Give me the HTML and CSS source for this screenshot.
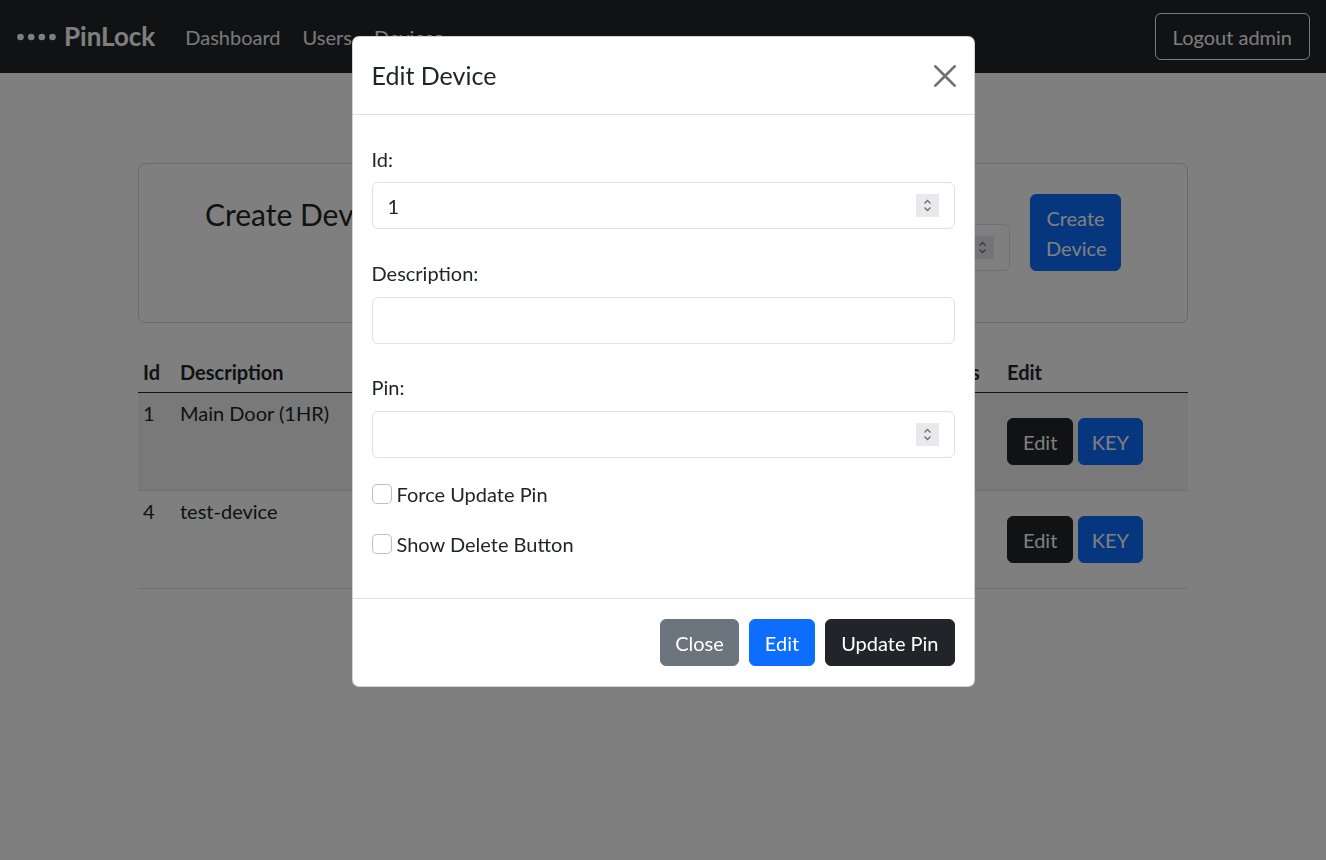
FILE: index.html
```html
<!DOCTYPE html>
<html lang="en">
<head>
<meta charset="utf-8">
<title>PinLock - Devices</title>
<link rel="stylesheet" href="styles.css">
</head>
<body>
<nav class="navbar">
  <a class="brand" href="#">
    <svg class="dots" width="40" height="8" viewBox="0 0 40 8"><circle cx="3.5" cy="4" r="3.3"/><circle cx="14.2" cy="4" r="3.3"/><circle cx="24.8" cy="4" r="3.3"/><circle cx="35.5" cy="4" r="3.3"/></svg>
    <span>PinLock</span>
  </a>
  <ul class="nav">
    <li><a href="#">Dashboard</a></li>
    <li><a href="#">Users</a></li>
    <li><a href="#" class="active">Devices</a></li>
  </ul>
  <button class="btn btn-outline-light logout">Logout admin</button>
</nav>

<main class="container">
  <div class="card">
    <div class="card-body">
      <h4 class="card-title">Create Device</h4>
      <form class="create-form">
        <input class="form-control desc-input" type="text">
        <div class="num pin-input">
          <input class="form-control" type="text">
          <span class="spin"><svg width="23" height="23" viewBox="0 0 23 23"><path d="M8.5 9.5 11.5 6.5 14.5 9.5M8.5 13.5 11.5 16.5 14.5 13.5"/></svg></span>
        </div>
        <button type="button" class="btn btn-primary create-btn">Create Device</button>
      </form>
    </div>
  </div>

  <table class="table">
    <colgroup>
      <col class="c-id"><col class="c-desc"><col class="c-pin"><col class="c-last"><col class="c-act"><col class="c-edit">
    </colgroup>
    <thead>
      <tr><th>Id</th><th>Description</th><th></th><th></th><th>Actions</th><th>Edit</th></tr>
    </thead>
    <tbody>
      <tr class="striped">
        <td>1</td><td>Main Door (1HR)</td><td></td><td></td><td></td>
        <td class="btn-cell"><div class="btn-row"><button class="btn btn-dark">Edit</button><button class="btn btn-primary key">KEY</button></div></td>
      </tr>
      <tr>
        <td>4</td><td>test-device</td><td></td><td></td><td></td>
        <td class="btn-cell"><div class="btn-row"><button class="btn btn-dark">Edit</button><button class="btn btn-primary key">KEY</button></div></td>
      </tr>
    </tbody>
  </table>
</main>

<div class="backdrop"></div>

<div class="modal">
  <div class="modal-dialog">
    <div class="modal-header">
      <h5 class="modal-title">Edit Device</h5>
      <button class="btn-close" type="button" aria-label="Close">
        <svg width="22" height="22" viewBox="0 0 16 16"><path d="M.293.293a1 1 0 0 1 1.414 0L8 6.586 14.293.293a1 1 0 1 1 1.414 1.414L9.414 8l6.293 6.293a1 1 0 0 1-1.414 1.414L8 9.414l-6.293 6.293a1 1 0 0 1-1.414-1.414L6.586 8 .293 1.707a1 1 0 0 1 0-1.414z"/></svg>
      </button>
    </div>
    <div class="modal-body">
      <div class="group first">
        <label class="form-label">Id:</label>
        <div class="num">
          <input class="form-control" type="text" value="1">
          <span class="spin"><svg width="23" height="23" viewBox="0 0 23 23"><path d="M8.5 9.5 11.5 6.5 14.5 9.5M8.5 13.5 11.5 16.5 14.5 13.5"/></svg></span>
        </div>
      </div>
      <div class="group desc-group">
        <label class="form-label">Description:</label>
        <input class="form-control" type="text">
      </div>
      <div class="group pin-group">
        <label class="form-label">Pin:</label>
        <div class="num">
          <input class="form-control" type="text">
          <span class="spin"><svg width="23" height="23" viewBox="0 0 23 23"><path d="M8.5 9.5 11.5 6.5 14.5 9.5M8.5 13.5 11.5 16.5 14.5 13.5"/></svg></span>
        </div>
      </div>
      <label class="form-check first-check"><input type="checkbox"><span>Force Update Pin</span></label>
      <label class="form-check last-check"><input type="checkbox"><span>Show Delete Button</span></label>
    </div>
    <div class="modal-footer">
      <button class="btn btn-secondary close-btn">Close</button>
      <button class="btn btn-primary">Edit</button>
      <button class="btn btn-dark">Update Pin</button>
    </div>
  </div>
</div>
</body>
</html>
```

FILE: styles.css
```css
* { box-sizing: border-box; }
html, body { margin: 0; padding: 0; }
body {
  font-family: Lato, "Liberation Sans", sans-serif;
  font-size: 20px;
  line-height: 1.5;
  color: #212529;
  background: #fff;
  min-height: 860px;
}

/* navbar */
.navbar {
  height: 73px;
  background: #212529;
  display: flex;
  align-items: center;
  padding: 0 16px;
}
.brand {
  display: flex;
  align-items: center;
  color: #fff;
  font-size: 26px;
  font-weight: 700;
  text-decoration: none;
  margin-right: 19px;
}
.dots { fill: #fff; margin-left: 1px; margin-right: 7px; }
.nav {
  display: flex;
  list-style: none;
  margin: 0;
  padding: 0;
  flex: 1;
}
.nav a {
  display: block;
  padding: 10px 11px;
  color: #f2f2f2;
  text-decoration: none;
}
.nav a.active { color: #fff; }

/* buttons */
.btn {
  font-family: inherit;
  font-size: 20px;
  line-height: 30px;
  padding: 7.5px 15px;
  border: 1px solid transparent;
  border-radius: 6px;
  cursor: pointer;
  color: #fff;
  background: transparent;
}
.btn-outline-light { color: #f8f9fa; border-color: #f8f9fa; }
.logout { padding-left: 17px; padding-right: 17px; }
.btn-primary { background: #0d6efd; border-color: #0d6efd; }
.btn-secondary { background: #6c757d; border-color: #6c757d; }
.btn-dark { background: #212529; border-color: #212529; }
.key { padding-left: 12.5px; padding-right: 12.5px; }
.close-btn { padding-left: 14px; padding-right: 14px; }

/* content */
.container {
  width: 1050px;
  margin: 90px auto 0;
}
.card {
  border: 1px solid rgba(0, 0, 0, .175);
  border-radius: 7px;
}
.card-body {
  padding: 30px 66px 51px;
  display: flex;
  justify-content: space-between;
  align-items: flex-start;
}
.card-title {
  margin: 2px 0 0;
  font-size: 30px;
  font-weight: 400;
  line-height: 1.2;
}
.create-form {
  display: flex;
  align-items: flex-end;
  gap: 20px;
}
.desc-input { width: 240px; }
.pin-input { width: 200px; }
.create-btn { width: 91px; }

.form-control {
  display: block;
  width: 100%;
  height: 47px;
  font-family: inherit;
  font-size: 20px;
  line-height: 30px;
  padding: 7.5px 15px;
  color: #212529;
  background: #fff;
  border: 1px solid #dee2e6;
  border-radius: 6px;
}
.num { position: relative; }
.spin {
  position: absolute;
  right: 16px;
  top: 50%;
  margin-top: -11.5px;
  width: 23px;
  height: 23px;
  background: #e9e9ed;
  display: block;
}
.spin svg { display: block; fill: none; stroke: #707070; stroke-width: 1.3; }

/* table */
.table {
  width: 100%;
  margin-top: 29px;
  border-collapse: collapse;
  table-layout: fixed;
}
.c-id { width: 37px; }
.c-desc { width: 300px; }
.c-pin { width: 200px; }
.c-last { width: 232px; }
.c-act { width: 95px; }
.c-edit { width: 186px; }
.table th, .table td {
  padding: 5px;
  text-align: left;
  vertical-align: top;
  border-bottom: 1px solid #dee2e6;
}
.table th { font-weight: 700; border-bottom: 1px solid #212529; }
.table tbody tr { height: 98px; }
.table tr.striped td { background: rgba(0, 0, 0, .05); }
.table td.btn-cell { vertical-align: middle; }
.btn-row { display: flex; gap: 5px; }

/* backdrop + modal */
.backdrop {
  position: fixed;
  inset: 0;
  background: rgba(0, 0, 0, .5);
}
.modal {
  position: fixed;
  inset: 0;
}
.modal-dialog {
  width: 623px;
  margin: 36px auto 0;
  background: #fff;
  border: 1px solid rgba(0, 0, 0, .175);
  border-radius: 7px;
}
.modal-header {
  display: flex;
  align-items: center;
  justify-content: space-between;
  padding: 20px 18px 20px 19px;
  border-bottom: 1px solid #dee2e6;
}
.modal-title {
  margin: 0;
  font-size: 25px;
  font-weight: 400;
  line-height: 37px;
}
.btn-close {
  border: 0;
  background: transparent;
  padding: 0;
  width: 22px;
  height: 22px;
  cursor: pointer;
}
.btn-close svg { display: block; fill: #000; opacity: .55; }

.modal-body { padding: 20px 19px; }
.group { margin-top: 29px; }
.group.first { margin-top: 9px; }
.group.pin-group { margin-top: 28px; }
.form-label {
  display: block;
  margin-bottom: 8px;
}
.desc-group .form-label, .pin-group .form-label { margin-bottom: 9px; }
.form-check {
  display: flex;
  align-items: center;
  gap: 5px;
  height: 30px;
  margin-bottom: 20px;
}
.form-check.first-check { margin-top: 21px; }
.form-check.last-check { margin-bottom: 19px; }
.form-check input {
  appearance: none;
  -webkit-appearance: none;
  width: 20px;
  height: 20px;
  margin: 0;
  border: 1px solid rgba(0, 0, 0, .25);
  border-radius: 5px;
  background: #fff;
}
.modal-footer {
  display: flex;
  justify-content: flex-end;
  gap: 10px;
  padding: 20px 19px 20px;
  border-top: 1px solid #dee2e6;
}
```
